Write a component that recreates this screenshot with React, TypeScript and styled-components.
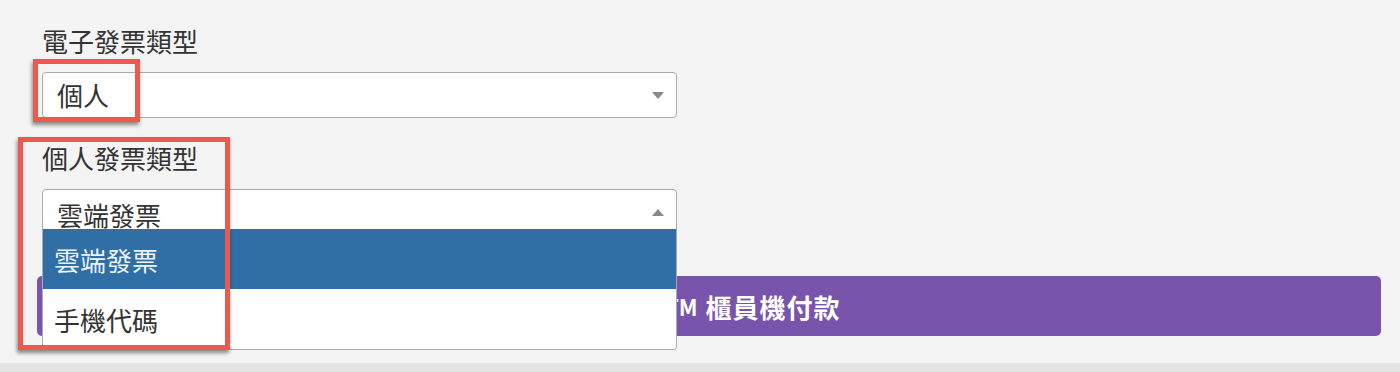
import styled, { createGlobalStyle } from "styled-components";

const GlobalStyle = createGlobalStyle`
  html, body {
    margin: 0;
    padding: 0;
  }
  body {
    font-family: "Noto Sans CJK TC", "Noto Sans", sans-serif;
    background: #e3e3e3;
  }
`;

type Option = { label: string };

const options: Option[] = [{ label: "雲端發票" }, { label: "手機代碼" }];

const App = () => {
  return (
    <>
      <GlobalStyle />
      <SPage>
        <SPanel>
          <SField $gap={23}>
            <SLabel>電子發票類型</SLabel>
            <SSelectWrap>
              <SSelect>
                <SValue>個人</SValue>
                <SArrow />
              </SSelect>
              <SMark $top={-13} $left={-9} $width={107} $height={63} />
            </SSelectWrap>
          </SField>

          <SField $gap={0}>
            <SLabel>個人發票類型</SLabel>
            <SSelectWrap>
              <SSelect $open>
                <SValue $open>雲端發票</SValue>
                <SArrow $up />
              </SSelect>
              <SList>
                {options.map((option, i) => (
                  <SOption key={option.label} $active={i === 0}>
                    {option.label}
                  </SOption>
                ))}
              </SList>
            </SSelectWrap>
            <SMark $top={-4} $left={-24} $width={212} $height={213} />
          </SField>

          <SPayButton>
            <SLatin>ATM</SLatin>
            <SButtonText>櫃員機付款</SButtonText>
          </SPayButton>
        </SPanel>
        <SFooter />
      </SPage>
    </>
  );
};

const SPage = styled.div`
  display: flex;
  flex-direction: column;
  height: 372px;
`;

const SPanel = styled.div`
  height: 363px;
  box-sizing: border-box;
  background: #f4f4f4;
  padding: 24px 19px 0 37px;
`;

const SFooter = styled.div`
  flex: 1;
  background: #e3e3e3;
`;

const SField = styled.div<{ $gap: number }>`
  position: relative;
  width: 635px;
  margin-left: 5px;
  margin-bottom: ${({ $gap }) => $gap}px;
`;

const SLabel = styled.div`
  font-size: 26px;
  line-height: 34px;
  color: #333;
  margin-bottom: 14px;
`;

const SSelectWrap = styled.div`
  position: relative;
`;

const SSelect = styled.div<{ $open?: boolean }>`
  display: flex;
  align-items: center;
  justify-content: space-between;
  box-sizing: border-box;
  height: 46px;
  padding: 0 12px 0 14px;
  background: #fff;
  border: 1px solid #aaa;
  border-radius: ${({ $open }) => ($open ? "4px 4px 0 0" : "4px")};
`;

const SValue = styled.span<{ $open?: boolean }>`
  font-size: 26px;
  line-height: 34px;
  color: #333;
  padding-top: ${({ $open }) => ($open ? "5px" : "0")};
`;

const SArrow = styled.span<{ $up?: boolean }>`
  width: 0;
  height: 0;
  border-left: 6px solid transparent;
  border-right: 6px solid transparent;
  ${({ $up }) =>
    $up ? "border-bottom: 7px solid #888;" : "border-top: 7px solid #888;"}
`;

const SList = styled.div`
  position: absolute;
  top: 40px;
  left: 0;
  right: 0;
  z-index: 2;
  background: #fff;
  border: 1px solid #aaa;
  border-top: none;
  border-radius: 0 0 4px 4px;
  overflow: hidden;
`;

const SOption = styled.div<{ $active: boolean }>`
  display: flex;
  align-items: center;
  height: 60px;
  padding-left: 11px;
  font-size: 26px;
  color: ${({ $active }) => ($active ? "#eef4fb" : "#333")};
  background: ${({ $active }) => ($active ? "#2f6fa6" : "#fff")};
`;

const SMark = styled.div<{ $top: number; $left: number; $width: number; $height: number }>`
  position: absolute;
  top: ${({ $top }) => $top}px;
  left: ${({ $left }) => $left}px;
  width: ${({ $width }) => $width}px;
  height: ${({ $height }) => $height}px;
  box-sizing: border-box;
  border: 5px solid #ec5a4e;
  box-shadow: -1px 3px 4px rgba(0, 0, 0, 0.45);
  z-index: 3;
  pointer-events: none;
`;

const SPayButton = styled.button`
  display: flex;
  align-items: center;
  justify-content: center;
  width: 100%;
  height: 60px;
  margin-top: 41px;
  padding: 0 0 0 75px;
  border: none;
  border-radius: 5px;
  background: #7954ad;
  color: #fff;
  font-family: inherit;
  font-weight: 700;
`;

const SLatin = styled.span`
  font-size: 22px;
  margin-right: 8px;
`;

const SButtonText = styled.span`
  font-size: 26px;
  letter-spacing: 1px;
`;

export default App;
